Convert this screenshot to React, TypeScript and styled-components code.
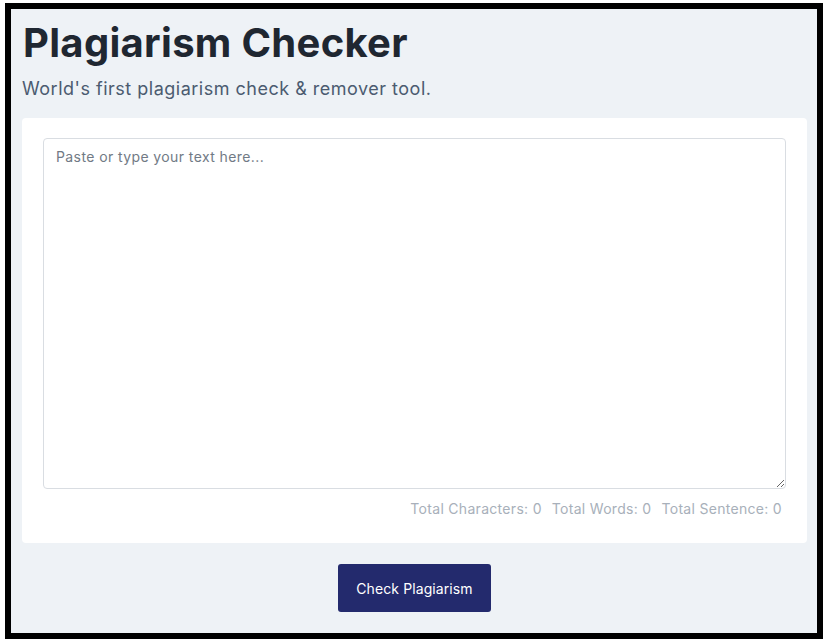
import React, { useState } from "react";
import styled, { createGlobalStyle } from "styled-components";

const GlobalStyle = createGlobalStyle`
  html, body {
    margin: 0;
    padding: 0;
    background: #ffffff;
  }
  body {
    font-family: Inter, "Open Sans", "Liberation Sans", sans-serif;
  }
`;

const Page = styled.div`
  padding: 3px 0 0 5px;
`;

const Frame = styled.div`
  box-sizing: border-box;
  width: 818px;
  height: 636px;
  border: 6px solid #000;
  background: #eef2f6;
  padding: 0 10px 0 11px;
  display: flex;
  flex-direction: column;
`;

const Title = styled.h1`
  margin: 10px 0 0 1px;
  font-size: 40px;
  line-height: 48px;
  font-weight: 700;
  color: #1f2731;
  letter-spacing: 0.3px;
`;

const Subtitle = styled.p`
  margin: 10px 0 0 0;
  font-size: 18px;
  line-height: 24px;
  letter-spacing: 0.5px;
  color: #4b5b70;
`;

const Card = styled.div`
  margin-top: 17px;
  background: #fff;
  border-radius: 4px;
  padding: 20px 21px 0 21px;
  height: 425px;
  box-sizing: border-box;
  display: flex;
  flex-direction: column;
`;

const TextArea = styled.textarea`
  box-sizing: border-box;
  width: 100%;
  height: 351px;
  border: 1px solid #d9dde2;
  border-radius: 4px;
  padding: 8px 12px;
  font-family: inherit;
  font-size: 14px;
  line-height: 20px;
  letter-spacing: 0.4px;
  color: #333;
  resize: vertical;
  outline: none;
  &::placeholder {
    color: #717a85;
  }
`;

const Stats = styled.div`
  display: flex;
  justify-content: flex-end;
  gap: 10px;
  margin-top: 10px;
  padding-right: 4px;
  font-size: 14px;
  line-height: 20px;
  letter-spacing: 0.3px;
  color: #a8b0ba;
`;

const ButtonRow = styled.div`
  display: flex;
  justify-content: center;
  margin-top: 21px;
`;

const CheckButton = styled.button`
  width: 153px;
  height: 48px;
  border: none;
  border-radius: 3px;
  background: #232a6d;
  color: #fff;
  font-family: inherit;
  font-size: 14px;
  letter-spacing: 0.1px;
  cursor: pointer;
`;

export default function App() {
  const [text, setText] = useState("");
  const chars = text.length;
  const words = text.trim() ? text.trim().split(/\s+/).length : 0;
  const sentences = text.split(/[.!?]+/).filter((s) => s.trim()).length;

  return (
    <Page>
      <GlobalStyle />
      <Frame>
        <Title>Plagiarism Checker</Title>
        <Subtitle>World's first plagiarism check &amp; remover tool.</Subtitle>
        <Card>
          <TextArea
            placeholder="Paste or type your text here..."
            value={text}
            onChange={(e) => setText(e.target.value)}
          />
          <Stats>
            <span>Total Characters: {chars}</span>
            <span>Total Words: {words}</span>
            <span>Total Sentence: {sentences}</span>
          </Stats>
        </Card>
        <ButtonRow>
          <CheckButton>Check Plagiarism</CheckButton>
        </ButtonRow>
      </Frame>
    </Page>
  );
}
